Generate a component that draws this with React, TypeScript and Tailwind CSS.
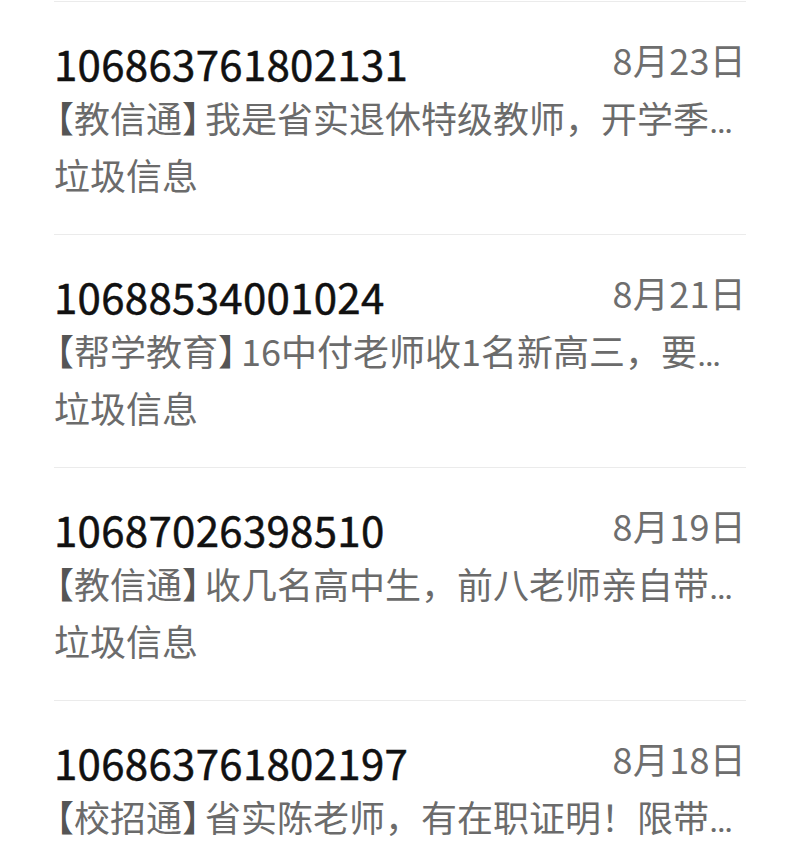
import React from "react";

type Msg = { num: string; date: string; tag: string; body: string };

const msgs: Msg[] = [
  { num: "106863761802131", date: "8月23日", tag: "教信通", body: "我是省实退休特级教师，开学季" },
  { num: "10688534001024", date: "8月21日", tag: "帮学教育", body: "16中付老师收1名新高三，要" },
  { num: "10687026398510", date: "8月19日", tag: "教信通", body: "收几名高中生，前八老师亲自带" },
  { num: "106863761802197", date: "8月18日", tag: "校招通", body: "省实陈老师，有在职证明！限带" },
];

const cjk = { fontFamily: '"Noto Sans CJK SC", "Noto Sans", sans-serif' };

export default function App() {
  return (
    <div className="w-[798px] h-[856px] overflow-hidden bg-white pt-[1px] pl-[54px] pr-[52px]" style={cjk}>
      {msgs.map((m, i) => (
        <div key={i} className="h-[233px] border-t border-[#ebebeb]">
          <div className="pt-[33px] flex justify-between items-start h-[89px]">
            <div className="text-[42px] leading-[56px] font-normal text-[#111] tracking-[0.3px] [-webkit-text-stroke:0.5px_#111]">{m.num}</div>
            <div className="text-[36px] leading-[48px] text-[#6e6e6e] tracking-[0.3px]">{m.date}</div>
          </div>
          <div className="text-[36px] leading-[53px] text-[#6b6b6b] whitespace-nowrap">
            <span className="ml-[-16px] text-[#555]">【</span>
            {m.tag}
            <span className="mr-[-13px] text-[#555]">】</span>
            {m.body}
            <span style={{ fontFamily: 'Roboto, "Noto Sans", sans-serif' }}>…</span>
          </div>
          <div className="text-[36px] leading-[53px] text-[#6b6b6b]">垃圾信息</div>
        </div>
      ))}
    </div>
  );
}
